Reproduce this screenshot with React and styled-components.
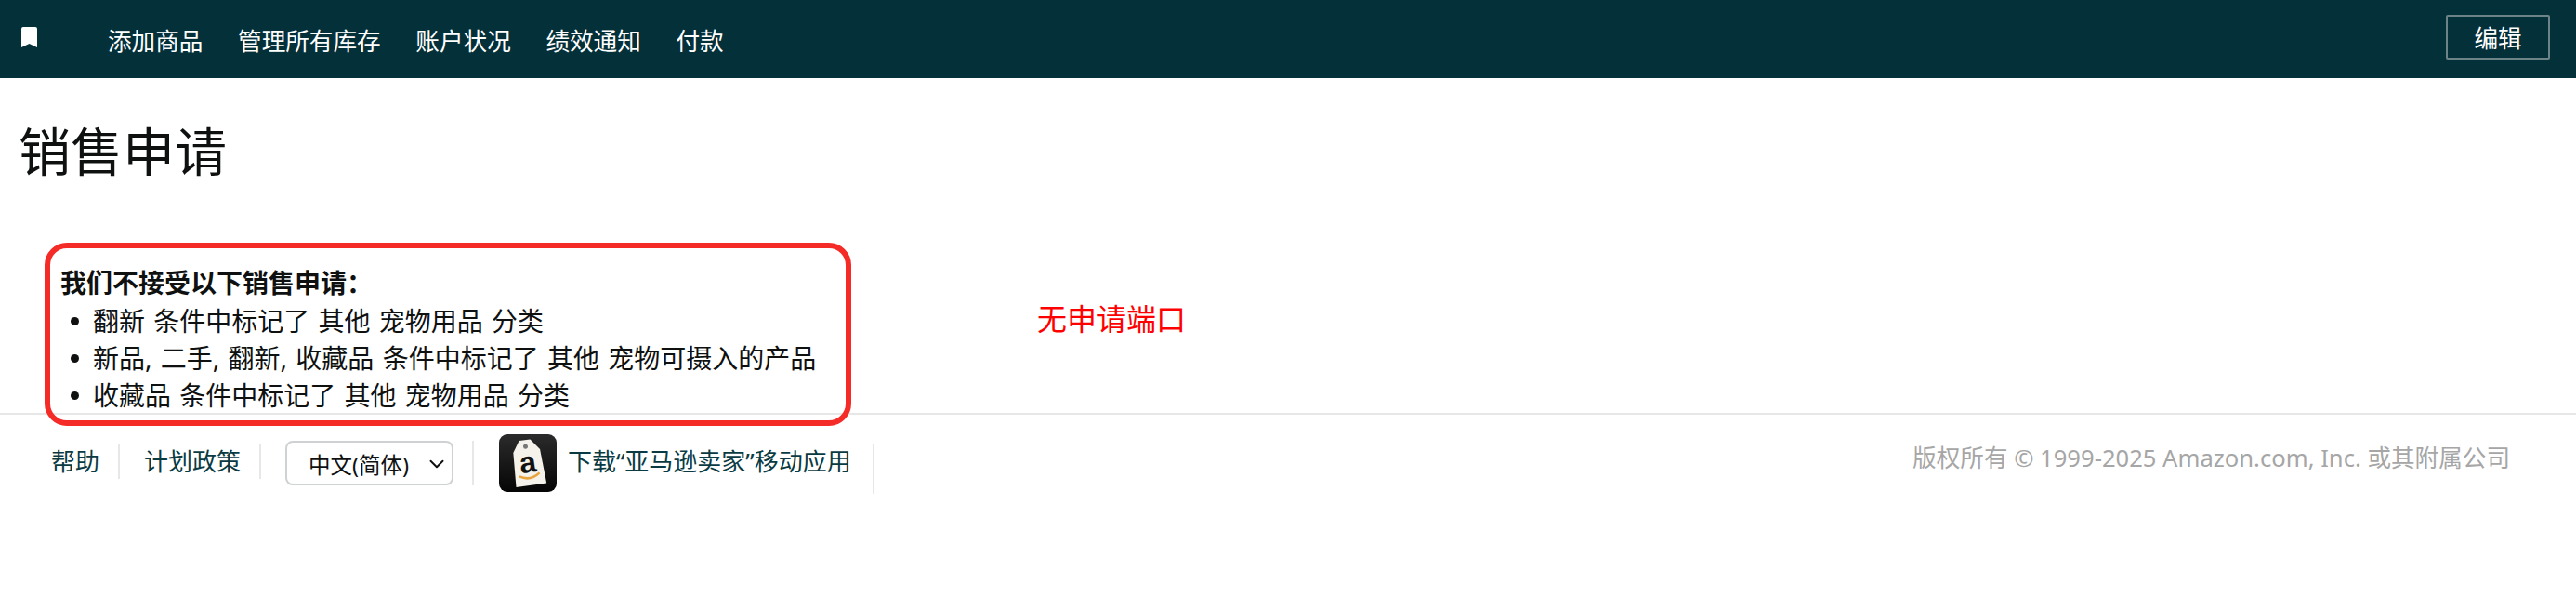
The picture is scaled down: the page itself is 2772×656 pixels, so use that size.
import React from "react";
import styled, { createGlobalStyle } from "styled-components";
import { ChevronDown } from "lucide-react";

const GlobalStyle = createGlobalStyle`
  html, body {
    margin: 0;
    padding: 0;
    background: #fff;
    font-family: "Noto Sans", "Noto Sans CJK SC", sans-serif;
    color: #0f1111;
  }
`;

const Page = styled.div`
  width: 2772px;
  height: 656px;
  overflow: hidden;
`;

const TopBar = styled.header`
  height: 84px;
  background: #033039;
  display: flex;
  align-items: center;
  padding: 0 28px 0 23px;
  box-sizing: border-box;
`;

const Bookmark = styled.svg`
  width: 17px;
  height: 22px;
  margin-top: -4px;
  fill: #fff;
  flex: none;
`;

const NavList = styled.nav`
  display: flex;
  gap: 37.7px;
  margin: 5px 0 0 76px;
  flex: 1;
`;

const NavLink = styled.a`
  color: #fff;
  font-size: 25.6px;
  line-height: 36px;
  white-space: nowrap;
`;

const EditButton = styled.button`
  width: 112px;
  height: 48px;
  margin-top: -5px;
  padding: 0;
  background: transparent;
  border: 2px solid #6c8488;
  border-radius: 2px;
  color: #fff;
  font: inherit;
  font-size: 25.6px;
`;

const Main = styled.main`
  height: 360px;
  box-sizing: border-box;
  padding: 48px 0 0 20px;
`;

const Title = styled.h1`
  margin: 0;
  font-size: 56px;
  line-height: 60px;
  font-weight: 400;
`;

const ContentRow = styled.div`
  display: flex;
  margin: 92px 0 0 45px;
`;

const Message = styled.section`
  position: relative;
  width: 836px;
  font-size: 28px;
  line-height: 40px;
  &::after {
    content: "";
    position: absolute;
    top: -23px;
    left: -17px;
    width: 868px;
    height: 197px;
    box-sizing: border-box;
    border: 6px solid #f52b27;
    border-radius: 24px;
  }
`;

const MessageTitle = styled.div`
  font-weight: 700;
`;

const Conditions = styled.ul`
  margin: 1px 0 0;
  padding: 0;
  list-style: none;
`;

const Condition = styled.li`
  display: flex;
  align-items: center;
  word-spacing: 2px;
  white-space: pre;
  &::before {
    content: "";
    flex: none;
    width: 9px;
    height: 9px;
    margin: 0 15px 0 11px;
    border-radius: 50%;
    background: #0f1111;
  }
`;

const Note = styled.div`
  margin: 37px 0 0 215px;
  font-size: 32px;
  line-height: 44px;
  color: #f00;
  white-space: nowrap;
`;

const Footer = styled.footer`
  border-top: 2px solid #e7e7e7;
  display: flex;
  justify-content: space-between;
  padding: 31px 71px 0 0;
`;

const FooterLeft = styled.div`
  display: flex;
  align-items: flex-start;
`;

const FooterItem = styled.div`
  display: flex;
  align-items: flex-start;
  gap: ${(p) => p.$gap || 0}px;
  height: ${(p) => p.$height}px;
  margin-top: ${(p) => p.$offset || 0}px;
  padding: 0 ${(p) => p.$right}px 0 ${(p) => p.$left}px;
  border-right: 2px solid #e7e7e7;
  font-size: 26px;
  line-height: 38px;
  color: #0a3a42;
  white-space: nowrap;
`;

const SelectWrap = styled.div`
  position: relative;
  width: 181px;
  height: 48px;
  svg {
    position: absolute;
    top: 12px;
    right: 5px;
    color: #0f1111;
    pointer-events: none;
  }
`;

const LangSelect = styled.select`
  appearance: none;
  width: 100%;
  height: 100%;
  box-sizing: border-box;
  padding: 4px 0 0 23px;
  background: #fff;
  border: 2px solid #cfd2d2;
  border-radius: 8px;
  font: inherit;
  font-size: 23.5px;
  color: #0f1111;
`;

const AppIcon = styled.svg`
  width: 62px;
  height: 62px;
  margin-top: -10px;
  flex: none;
`;

const Copyright = styled.div`
  margin-top: -2px;
  font-size: 25.6px;
  line-height: 36px;
  color: #a6a6a6;
  white-space: nowrap;
`;

const navItems = ["添加商品", "管理所有库存", "账户状况", "绩效通知", "付款"];

const conditions = [
  "翻新 条件中标记了 其他 宠物用品 分类",
  "新品, 二手, 翻新, 收藏品 条件中标记了 其他 宠物可摄入的产品",
  "收藏品 条件中标记了 其他 宠物用品 分类",
];

export default function App() {
  return (
    <Page>
      <GlobalStyle />
      <TopBar>
        <Bookmark viewBox="0 0 17 22">
          <path d="M2 0h13a2 2 0 0 1 2 2v20l-8.500-4L0 22V2a2 2 0 0 1 2-2z" />
        </Bookmark>
        <NavList>
          {navItems.map((item) => (
            <NavLink key={item}>{item}</NavLink>
          ))}
        </NavList>
        <EditButton>编辑</EditButton>
      </TopBar>
      <Main>
        <Title>销售申请</Title>
        <ContentRow>
          <Message>
            <MessageTitle>我们不接受以下销售申请：</MessageTitle>
            <Conditions>
              {conditions.map((c) => (
                <Condition key={c}>{c}</Condition>
              ))}
            </Conditions>
          </Message>
          <Note>无申请端口</Note>
        </ContentRow>
      </Main>
      <Footer>
        <FooterLeft>
          <FooterItem $height={38} $left={55} $right={20}>
            帮助
          </FooterItem>
          <FooterItem $height={38} $left={26} $right={20}>
            计划政策
          </FooterItem>
          <FooterItem $height={48} $offset={-3} $left={26} $right={20}>
            <SelectWrap>
              <LangSelect defaultValue="zh">
                <option value="zh">中文(简体)</option>
              </LangSelect>
              <ChevronDown size={26} strokeWidth={1.8} />
            </SelectWrap>
          </FooterItem>
          <FooterItem $height={54} $left={27} $right={23} $gap={12}>
            <AppIcon viewBox="0 0 62 62">
              <defs>
                <linearGradient id="tile" x1="0" y1="0" x2="0" y2="1">
                  <stop offset="0" stopColor="#2b2b2b" />
                  <stop offset="1" stopColor="#050505" />
                </linearGradient>
              </defs>
              <rect width="62" height="62" rx="9" fill="url(#tile)" />
              <g transform="rotate(-8 31 31)">
                <path d="M25 6h12l9 12 2 37H15l2-37z" fill="#f4f2ea" />
                <circle cx="31" cy="13" r="2.500" fill="#777" />
                <text x="31" y="41" textAnchor="middle" fontSize="32" fontWeight="700" fontFamily="Liberation Sans, sans-serif" fill="#111">a</text>
                <path d="M20 44q11 7 22-1" fill="none" stroke="#e8a33c" strokeWidth="2.500" />
              </g>
            </AppIcon>
            下载“亚马逊卖家”移动应用
          </FooterItem>
        </FooterLeft>
        <Copyright>版权所有 © 1999-2025 Amazon.com, Inc. 或其附属公司</Copyright>
      </Footer>
    </Page>
  );
}
